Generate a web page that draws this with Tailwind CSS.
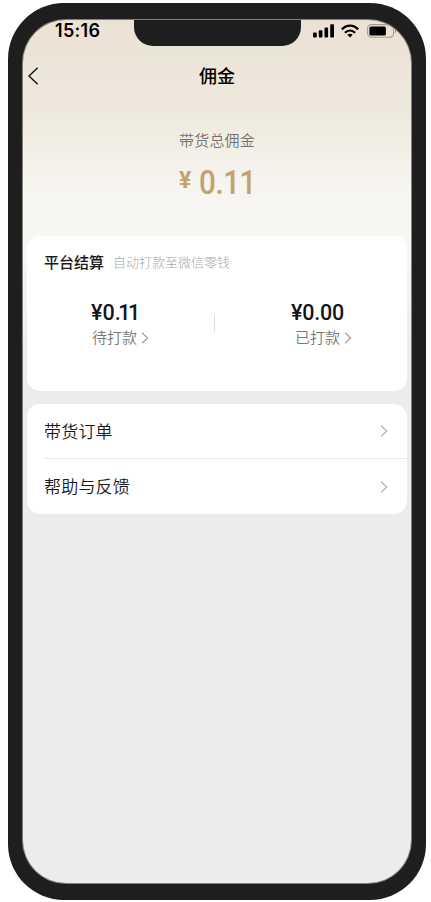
<!DOCTYPE html>
<html lang="zh-CN">
<head>
<meta charset="utf-8">
<title>佣金</title>
<script src="https://cdn.jsdelivr.net/npm/@tailwindcss/browser@4"></script>
</head>
<body class="bg-white w-[431px] h-[902px] overflow-hidden font-['Noto_Sans_CJK_SC',sans-serif] text-[#1a1a1a]">
<div class="ml-[8px] pt-[3px]">
<div class="w-[418px] h-[897px] rounded-[56px] bg-[#1e1e1e] pl-[14px] pt-[16px]">
  <main class="relative w-[390px] h-[865px] rounded-[44px] overflow-hidden bg-[#ececec] bg-linear-[180deg,#ece1d5_0px,#eee9dd_90px,#f7f5f1_170px,#f8f7f3_218px,#ececec_325px] border border-[#55534f]/70 px-[4px]">
    <div class="absolute left-[111px] -top-px w-[167px] h-[27px] bg-[#1e1e1e] rounded-b-[19px]"></div>
    <header class="-mx-[4px]">
      <div class="h-[22px] flex items-center justify-between pl-[32px] pr-[15px]">
        <span class="font-['Inter',sans-serif] font-semibold text-[18px] leading-[22px] tracking-[0.3px] text-black">15:16</span>
        <div class="flex items-center gap-[7px] -mt-[1px]">
          <svg width="21" height="14" viewBox="0 0 21 14" fill="#000"><rect x="0" y="8.5" width="3.8" height="5" rx="1"/><rect x="5.8" y="6.3" width="3.6" height="7.2" rx="1"/><rect x="11.5" y="3.4" width="3.6" height="10.1" rx="1"/><rect x="17.2" y=".3" width="3.8" height="13.2" rx="1"/></svg>
          <svg width="18" height="14" viewBox="0 0 18 14" fill="none" stroke="#000" stroke-width="2.3"><path d="M.9 5.4C5.6.3 12.4.3 17.1 5.4M3.9 8.8c3-3 7.2-3 10.2 0"/><path d="M9 13.4 6.3 10.8q2.7-2.2 5.4 0z" fill="#000" stroke="none"/></svg>
          <svg class="ml-[1px]" width="29" height="14" viewBox="0 0 29 14"><rect x=".6" y=".6" width="26" height="12.6" rx="3.6" fill="none" stroke="#a39c94" stroke-width="1.1"/><rect x="2.4" y="2.4" width="16.5" height="9" rx="1.5"/><path d="M28 4.8c1.3.8 1.3 3.6 0 4.4z" fill="#8a847d"/></svg>
        </div>
      </div>
      <div class="h-[68px] flex items-center pl-[5px] pr-[16px]">
        <svg width="11" height="18" viewBox="0 0 11 18" fill="none" stroke="#111" stroke-width="1.4"><path d="M9.7.8 1 9l8.7 8.2"/></svg>
        <h1 class="flex-1 text-center font-medium text-[18px] leading-[26px] -mt-[2px] text-black">佣金</h1>
      </div>
    </header>
    <section class="h-[126px] pt-[19px] text-center">
      <p class="text-[15px] leading-[22px] tracking-[0.2px] font-[350] text-[#75726d]">带货总佣金</p>
      <p class="mt-[10px] h-[42px] pl-[152px] flex items-center text-[#c0a370] font-['Roboto',sans-serif] font-medium">
        <span class="text-[23px] leading-[30px] -mt-[3px] w-[20px] text-left font-bold">¥</span>
        <span class="text-[34px] leading-[42px]"><span class="inline-block origin-left scale-x-87 tracking-[-0.5px]">0.11</span></span>
      </p>
    </section>
    <section class="h-[155px] rounded-[13px] bg-white">
      <div class="pl-[17px] pt-[14px] flex items-center h-[38px]">
        <h2 class="font-medium text-[15px] leading-[22px]">平台结算</h2>
        <span class="ml-[9px] text-[13px] leading-[20px] text-[#a9a9a9] font-light">自动打款至微信零钱</span>
      </div>
      <div class="flex mt-[26px] h-[52px]">
        <div class="w-[187px] pl-[64px]">
          <p class="font-['Roboto',sans-serif] font-medium text-[21.5px] leading-[26px] text-[#151515]">¥0<span class="tracking-[-2.4px]">.11</span></p>
          <p class="-mt-px pl-px flex items-center text-[15px] leading-[24px] font-[350] text-[#777]"><span>待打款</span><svg class="ml-[4px] mt-[2px]" width="8" height="12" viewBox="0 0 8 12" fill="none" stroke="#a0a0a0" stroke-width="1.2"><path d="M1 .8 6.5 6 1 11.2"/></svg></p>
        </div>
        <div class="w-px h-[17px] mt-[15px] bg-[#dedede]"></div>
        <div class="pl-[76px]">
          <p class="font-['Roboto',sans-serif] font-medium text-[21.5px] leading-[26px] tracking-[-0.2px] text-[#151515]">¥0.00</p>
          <p class="-mt-px pl-[4px] flex items-center text-[15px] leading-[24px] font-[350] text-[#777]"><span>已打款</span><svg class="ml-[4px] mt-[2px]" width="8" height="12" viewBox="0 0 8 12" fill="none" stroke="#a0a0a0" stroke-width="1.2"><path d="M1 .8 6.5 6 1 11.2"/></svg></p>
        </div>
      </div>
    </section>
    <nav class="mt-[13px] h-[110px] rounded-[13px] bg-white pl-[17px]">
      <a class="h-[55px] border-b border-[#e6e6e6] flex items-center justify-between pr-[19px] text-[17px] leading-[24px] font-[350]"><span class="tracking-[0.2px]">带货订单</span><svg width="8" height="12" viewBox="0 0 8 12" fill="none" stroke="#adadad" stroke-width="1.2"><path d="M1 .6 6.6 6 1 11.4"/></svg></a>
      <a class="h-[55px] flex items-center justify-between pr-[19px] text-[17px] leading-[24px] font-[350]"><span class="tracking-[0.2px] -mt-px">帮助与反馈</span><svg width="8" height="12" viewBox="0 0 8 12" fill="none" stroke="#adadad" stroke-width="1.2"><path d="M1 .6 6.6 6 1 11.4"/></svg></a>
    </nav>
  </main>
</div>
</div>
</body>
</html>
